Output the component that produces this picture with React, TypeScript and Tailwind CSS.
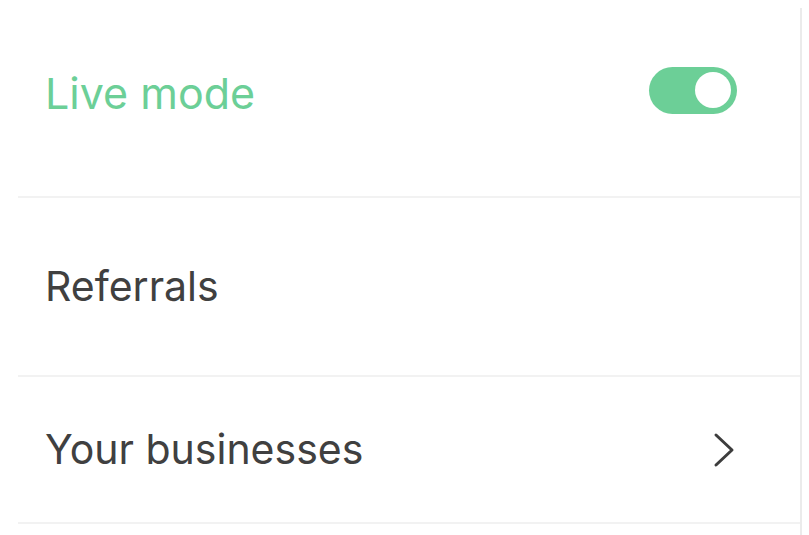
import React from "react";

const font = { fontFamily: "Inter, 'Noto Sans', sans-serif" };

function Toggle({ on }: { on: boolean }) {
  return (
    <div
      className={`mb-[6px] flex h-[47px] w-[88px] items-center rounded-full px-[6px] ${
        on ? "justify-end bg-[#6ccf97]" : "justify-start bg-gray-300"
      }`}
    >
      <div className="size-9 rounded-full bg-white" />
    </div>
  );
}

function Chevron() {
  return (
    <svg width="22" height="36" viewBox="0 0 22 36" fill="none">
      <polyline
        points="3,3 19,18 3,33"
        stroke="#3d3d3d"
        strokeWidth="3"
        strokeLinecap="round"
        strokeLinejoin="round"
      />
    </svg>
  );
}

export default function App() {
  return (
    <div className="h-[535px] w-[809px] overflow-hidden bg-white pt-2" style={font}>
      <div className="h-full w-[802px] border-r-2 border-[#ebebeb]">
        <div className="ml-[18px] flex h-[190px] items-center justify-between border-b-2 border-[#f2f2f2] pb-[18px] pl-[27px] pr-[63px]">
          <span className="text-[43px] leading-none text-[#6ccf97]">Live mode</span>
          <Toggle on />
        </div>
        <div className="ml-[18px] flex h-[179px] items-center border-b-2 border-[#f2f2f2] pl-[27px] pr-[63px]">
          <span className="text-[41px] leading-none text-[#404040]">Referrals</span>
        </div>
        <div className="ml-[18px] flex h-[147px] items-center justify-between border-b-2 border-[#f2f2f2] pl-[27px] pr-[65px]">
          <span className="text-[41px] leading-none text-[#404040]">Your businesses</span>
          <Chevron />
        </div>
      </div>
    </div>
  );
}
